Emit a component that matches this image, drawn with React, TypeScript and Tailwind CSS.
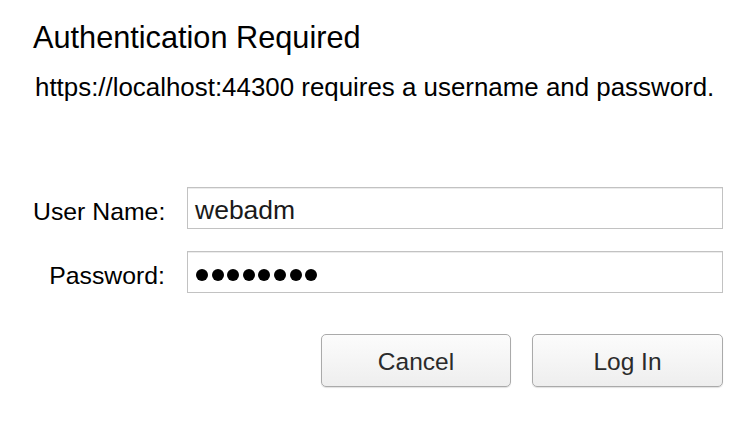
import React from "react";

export default function App() {
  const dots = Array.from({ length: 8 });
  return (
    <div className="w-[756px] h-[440px] bg-white text-black pl-[33px] pt-[20px] font-['Liberation_Sans',Arial,sans-serif]">
      <div className="text-[30.7px] leading-[36px]">Authentication Required</div>
      <div className="mt-[15px] ml-[2px] text-[25.9px] leading-[32px]">
        https://localhost:44300 requires a username and password.
      </div>
      <div className="w-[690px] mt-[84px]">
        <div className="flex items-start gap-[22px]">
          <div className="w-[132px] shrink-0 whitespace-nowrap text-right text-[24.8px] leading-[42px] mt-[4px]">User Name:</div>
          <div className="flex-1 h-[42px] border border-[#c2c2c2] shadow-[inset_0_1px_0_#ececec] bg-white flex items-center pl-[7px] pt-[6px] text-[26.5px] text-[#1a1a1a]">
            webadm
          </div>
        </div>
        <div className="flex items-start gap-[22px] mt-[18px]">
          <div className="w-[132px] shrink-0 whitespace-nowrap text-right text-[24.8px] leading-[42px] mt-[4px]">Password:</div>
          <div className="flex-1 h-[42px] border border-[#c2c2c2] shadow-[inset_0_1px_0_#ececec] bg-white flex items-center pl-[8px] pt-[5px] gap-[3.6px]">
            {dots.map((_, i) => (
              <span key={i} className="w-[12px] h-[12px] rounded-full bg-black inline-block" />
            ))}
          </div>
        </div>
        <div className="flex justify-end gap-[21px] mt-[37px]">
          <button className="w-[190px] h-[53px] rounded-[5px] border border-[#aaaaaa] bg-gradient-to-b from-[#fcfcfc] to-[#eeeeee] shadow-[0_1px_1px_rgba(0,0,0,0.12)] flex items-center justify-center pt-[4px] text-[24.5px] text-[#2b2b2b]">
            Cancel
          </button>
          <button className="w-[191px] h-[53px] rounded-[5px] border border-[#aaaaaa] bg-gradient-to-b from-[#fcfcfc] to-[#eeeeee] shadow-[0_1px_1px_rgba(0,0,0,0.12)] flex items-center justify-center pt-[4px] text-[24.5px] text-[#2b2b2b]">
            Log In
          </button>
        </div>
      </div>
    </div>
  );
}
